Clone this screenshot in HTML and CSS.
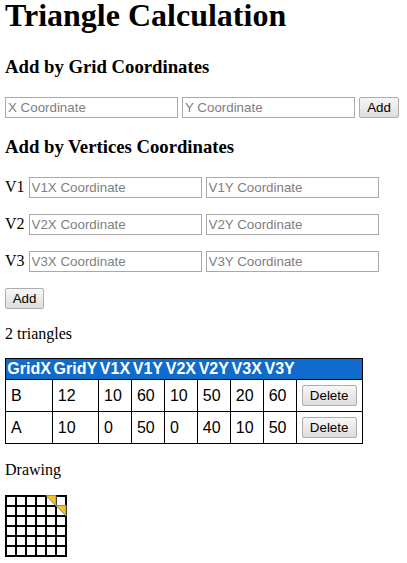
FILE: index.html
```html
<!DOCTYPE html>
<html>
<head>
<meta charset="utf-8">
<title>Triangle Calculation</title>
<link rel="stylesheet" href="styles.css">
</head>
<body>
<h1 class="title">Triangle Calculation</h1>

<h3 class="section">Add by Grid Coordinates</h3>
<div class="row row-grid">
  <input class="field" type="text" placeholder="X Coordinate">
  <input class="field" type="text" placeholder="Y Coordinate">
  <button class="btn">Add</button>
</div>

<h3 class="section section-v">Add by Vertices Coordinates</h3>
<div class="row vrow">
  <span class="vlabel">V1</span>
  <input class="field" type="text" placeholder="V1X Coordinate">
  <input class="field" type="text" placeholder="V1Y Coordinate">
</div>
<div class="row vrow">
  <span class="vlabel">V2</span>
  <input class="field" type="text" placeholder="V2X Coordinate">
  <input class="field" type="text" placeholder="V2Y Coordinate">
</div>
<div class="row vrow">
  <span class="vlabel">V3</span>
  <input class="field" type="text" placeholder="V3X Coordinate">
  <input class="field" type="text" placeholder="V3Y Coordinate">
</div>
<div class="row vrow">
  <button class="btn btn-add2">Add</button>
</div>

<p class="text count">2 triangles</p>

<table class="tri-table">
  <thead>
    <tr>
      <th>GridX</th><th>GridY</th><th>V1X</th><th>V1Y</th><th>V2X</th><th>V2Y</th><th>V3X</th><th>V3Y</th><th></th>
    </tr>
  </thead>
  <tbody>
    <tr>
      <td>B</td><td>12</td><td>10</td><td>60</td><td>10</td><td>50</td><td>20</td><td>60</td><td><button class="btn btn-del">Delete</button></td>
    </tr>
    <tr>
      <td>A</td><td>10</td><td>0</td><td>50</td><td>0</td><td>40</td><td>10</td><td>50</td><td><button class="btn btn-del">Delete</button></td>
    </tr>
  </tbody>
</table>

<p class="text drawing-label">Drawing</p>

<svg class="drawing" width="62" height="62" viewBox="0 0 62 62">
  <g stroke="#000" stroke-width="2">
    <line x1="1" y1="0" x2="1" y2="62"/>
    <line x1="11" y1="0" x2="11" y2="62"/>
    <line x1="21" y1="0" x2="21" y2="62"/>
    <line x1="31" y1="0" x2="31" y2="62"/>
    <line x1="41" y1="0" x2="41" y2="62"/>
    <line x1="51" y1="0" x2="51" y2="62"/>
    <line x1="61" y1="0" x2="61" y2="62"/>
    <line x1="0" y1="1" x2="62" y2="1"/>
    <line x1="0" y1="11" x2="62" y2="11"/>
    <line x1="0" y1="21" x2="62" y2="21"/>
    <line x1="0" y1="31" x2="62" y2="31"/>
    <line x1="0" y1="41" x2="62" y2="41"/>
    <line x1="0" y1="51" x2="62" y2="51"/>
    <line x1="0" y1="61" x2="62" y2="61"/>
  </g>
  <polygon points="41,0.5 51,0.5 51,11" fill="#f8c026" stroke="#8c8c8c" stroke-width="1"/>
  <polygon points="51,10.5 61,10.5 61,21" fill="#f8c026" stroke="#8c8c8c" stroke-width="1"/>
</svg>
</body>
</html>
```

FILE: styles.css
```css
html, body {
  margin: 0;
  padding: 0;
  background: #fff;
}

body {
  padding: 0 5px;
  font-family: "Liberation Serif", "Times New Roman", serif;
  font-size: 16px;
  color: #000;
}

.title {
  margin: 0;
  font-size: 32px;
  line-height: 30px;
  font-weight: bold;
}

.section {
  margin: 26px 0 0;
  font-size: 18.72px;
  font-weight: bold;
  line-height: 21px;
}

.section-v {
  margin-top: 18px;
}

.row {
  display: flex;
  align-items: center;
  gap: 4px;
}

.row-grid {
  margin-top: 20px;
}

.vrow {
  margin-top: 16px;
}

.section-v + .vrow {
  margin-top: 20px;
}

.vlabel {
  font-size: 16px;
  line-height: 21px;
  position: relative;
  top: -1px;
}

.field {
  box-sizing: border-box;
  width: 173px;
  height: 21px;
  margin: 0;
  padding: 1px 2px;
  border: 1px solid #a9a9a9;
  font-family: "Liberation Sans", Arial, sans-serif;
  font-size: 13.33px;
  color: #000;
  background: #fff;
  outline: none;
}

.field::placeholder {
  color: #808080;
  opacity: 1;
}

.btn {
  box-sizing: border-box;
  height: 21px;
  margin: 0;
  padding: 1px 6px;
  border: 1px solid #adadad;
  border-radius: 2px;
  background: linear-gradient(#f7f7f7, #dddddd);
  font-family: "Liberation Sans", Arial, sans-serif;
  font-size: 13.33px;
  color: #000;
}

.row-grid .btn {
  width: 40px;
}

.btn-add2 {
  width: 39px;
}

.btn-del {
  width: 55px;
  height: 21px;
  vertical-align: middle;
}

.text {
  margin: 16px 0;
  line-height: 18px;
}

.count {
  margin: 16px 0 15px;
}

.drawing-label {
  margin: 17px 0 16px;
}

.tri-table {
  border-collapse: collapse;
  border: 1px solid #000;
  font-family: "Liberation Sans", Arial, sans-serif;
  font-size: 16px;
}

.tri-table th {
  background: #0f6ccd;
  color: #fff;
  font-weight: bold;
  text-align: left;
  padding: 1px 1.35px;
  line-height: 18px;
  border: none;
}

.tri-table td {
  border: 1px solid #000;
  padding: 5px 5px;
  line-height: 18px;
  height: 21px;
}

.drawing {
  display: block;
}
```
